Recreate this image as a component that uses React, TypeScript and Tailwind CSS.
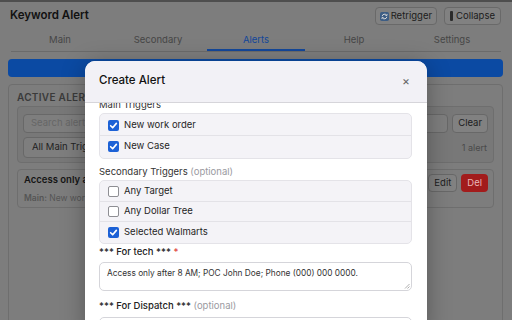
import React from "react";

function Check({ on }: { on: boolean }) {
  return on ? (
    <span className="w-[11px] h-[11px] rounded-[2px] bg-[#1c61d6] flex items-center justify-center shrink-0">
      <svg width="9" height="9" viewBox="0 0 12 12">
        <path d="M2.2 6.3 L4.9 9 L9.8 3.2" fill="none" stroke="#fff" strokeWidth="2.2" strokeLinecap="round" strokeLinejoin="round" />
      </svg>
    </span>
  ) : (
    <span className="w-[11px] h-[11px] rounded-[2px] bg-white border border-[#8e8e93] shrink-0" />
  );
}

function Row({ on, label, last }: { on: boolean; label: string; last?: boolean }) {
  return (
    <div className={`flex items-center h-[20px] px-[8px] gap-[5px] ${last ? "" : "border-b border-[#e3e2e7]"}`}>
      <Check on={on} />
      <span className="text-[9.5px] text-[#1f1f1f]">{label}</span>
    </div>
  );
}

export default function App() {
  return (
    <div className="relative w-[512px] h-[320px] overflow-hidden bg-[#7d7d7d] font-['Inter',sans-serif] border-t-2 border-[#4e4e4e]">
      {/* header */}
      <div className="h-[28px] flex items-center justify-between pl-[10px] pr-[11px]">
        <span className="text-[11.5px] font-semibold text-[#111]">Keyword Alert</span>
        <div className="flex gap-[7px]">
          <button className="h-[18px] px-[4px] flex items-center gap-[2px] rounded-[4px] border border-[#696969] bg-[#818181] text-[9.5px] text-[#1c1c1c]">
            <svg width="9" height="9" viewBox="0 0 10 10">
              <rect x="0" y="0" width="10" height="10" rx="2" fill="#3d5d84" />
              <path d="M2.4 4.6 A2.7 2.7 0 0 1 7.3 3.6" fill="none" stroke="#d8d8d8" strokeWidth="1.1" />
              <path d="M7.6 5.4 A2.7 2.7 0 0 1 2.7 6.4" fill="none" stroke="#d8d8d8" strokeWidth="1.1" />
              <path d="M7.9 2.2 L7.6 4 L5.9 3.6" fill="none" stroke="#d8d8d8" strokeWidth="1" />
              <path d="M2.1 7.8 L2.4 6 L4.1 6.4" fill="none" stroke="#d8d8d8" strokeWidth="1" />
            </svg>
            Retrigger
          </button>
          <button className="h-[18px] px-[5px] flex items-center gap-[3px] rounded-[4px] border border-[#696969] bg-[#818181] text-[9.5px] text-[#1c1c1c]">
            <span className="w-[3px] h-[10px] rounded-[1px] bg-[#2b2b2b]" />
            Collapse
          </button>
        </div>
      </div>
      {/* tabs */}
      <div className="grid grid-cols-5 mx-[11px] h-[22px] border-b border-[#6b6b6b] text-[9.5px] text-[#464646]">
        <div className="flex items-center justify-center">Main</div>
        <div className="flex items-center justify-center">Secondary</div>
        <div className="flex items-center justify-center text-[#13479a] border-b-2 border-[#13479a] pt-[2px]">Alerts</div>
        <div className="flex items-center justify-center">Help</div>
        <div className="flex items-center justify-center">Settings</div>
      </div>
      <div className="px-[8px] pt-[7px] pr-[9px]">
        <div className="h-[18px] rounded-[4px] bg-[#0b4aa3]" />
        <div className="mt-[7px] h-[260px] rounded-[4px] border border-[#6e6e6e] px-[8px] pt-[6px]">
          <div className="text-[10px] font-semibold tracking-[0.3px] text-[#3a3a3a] leading-[12px]">ACTIVE ALERTS</div>
          <div className="mt-[3px] rounded-[4px] border border-[#6e6e6e] bg-[#787878] px-[5px] pt-[7px] pb-[4px]">
            <div className="flex gap-[4px]">
              <div className="flex-1 h-[19px] rounded-[4px] border border-[#686868] bg-[#7e7e7e] px-[7px] flex items-center text-[9.5px] text-[#666]">Search alerts...</div>
              <button className="h-[19px] px-[5px] rounded-[4px] border border-[#686868] bg-[#818181] text-[9.5px] text-[#1c1c1c]">Clear</button>
            </div>
            <div className="mt-[4px] flex items-center justify-between">
              <div className="w-[220px] h-[21px] rounded-[4px] border border-[#686868] bg-[#7e7e7e] px-[8px] flex items-center text-[9.5px] text-[#222]">All Main Triggers</div>
              <span className="text-[9px] text-[#4a4a4a] pr-[1px]">1 alert</span>
            </div>
          </div>
          <div className="mt-[6px] h-[39px] rounded-[4px] border border-[#6e6e6e] pl-[6px] pr-[5px] flex justify-between">
            <div className="pt-[4px]">
              <div className="text-[9.5px] font-semibold text-[#151515] leading-[12px]">Access only after 8 AM; POC John Doe; Phone (000) 000 0000.</div>
              <div className="mt-[7px] text-[8.5px] text-[#555] leading-[11px]"><span className="font-semibold">Main:</span> New work order, New Case</div>
            </div>
            <div className="flex gap-[4px] pt-[4px]">
              <button className="h-[18px] px-[5px] rounded-[4px] border border-[#686868] bg-[#818181] text-[9.5px] text-[#1c1c1c]">Edit</button>
              <button className="h-[18px] px-[6px] rounded-[4px] bg-[#a21c1c] text-[9.5px] text-[#e8b6b6]">Del</button>
            </div>
          </div>
        </div>
      </div>

      {/* modal */}
      <div className="absolute left-[85px] top-[59px] w-[342px] h-[270px] bg-white rounded-t-[10px] shadow-[0_4px_24px_rgba(0,0,0,0.3)] overflow-hidden flex flex-col">
        <div className="h-[42px] shrink-0 bg-[#f2f1f6] border-b border-[#d6d5da] flex items-center justify-between pl-[14px] pr-[17px] pb-[1px]">
          <span className="text-[11.5px] font-medium text-[#111]">Create Alert</span>
          <span className="text-[12px] text-[#666] leading-none">×</span>
        </div>
        <div className="flex-1 overflow-hidden px-[14px] pr-[15px]">
          <div className="-mt-[5px] text-[9.5px] text-[#333] leading-[14px]">Main Triggers</div>
          <div className="mt-[1px] rounded-[5px] border border-[#e4e3e8] bg-[#f4f3f7] py-[2px]">
            <Row on label="New work order" />
            <Row on label="New Case" last />
          </div>
          <div className="mt-[6px] text-[9.5px] text-[#333] leading-[14px]">
            Secondary Triggers <span className="text-[#9a9a9f]">(optional)</span>
          </div>
          <div className="mt-[1px] rounded-[5px] border border-[#e4e3e8] bg-[#f4f3f7] py-[1px]">
            <Row on={false} label="Any Target" />
            <Row on={false} label="Any Dollar Tree" />
            <Row on label="Selected Walmarts" last />
          </div>
          <div className="mt-[1px] text-[9.5px] font-medium text-[#222] leading-[14px]">
            *** For tech *** <span className="text-[#e0443c]">*</span>
          </div>
          <div className="relative mt-[3px] h-[29px] rounded-[5px] border border-[#d5d5da] px-[7px] pt-[4px] text-[8.3px] text-[#333]">
            Access only after 8 AM; POC John Doe; Phone (000) 000 0000.
            <svg className="absolute right-[1px] bottom-[1px]" width="6" height="6" viewBox="0 0 6 6">
              <path d="M5.5 1 L1 5.5 M5.5 3.5 L3.5 5.5" stroke="#999" strokeWidth="0.8" />
            </svg>
          </div>
          <div className="mt-[8px] text-[9.5px] font-medium text-[#222] leading-[14px]">
            *** For Dispatch *** <span className="font-normal text-[#9a9a9f]">(optional)</span>
          </div>
          <div className="mt-[4px] h-[29px] rounded-[5px] border border-[#d5d5da]" />
        </div>
      </div>
    </div>
  );
}
